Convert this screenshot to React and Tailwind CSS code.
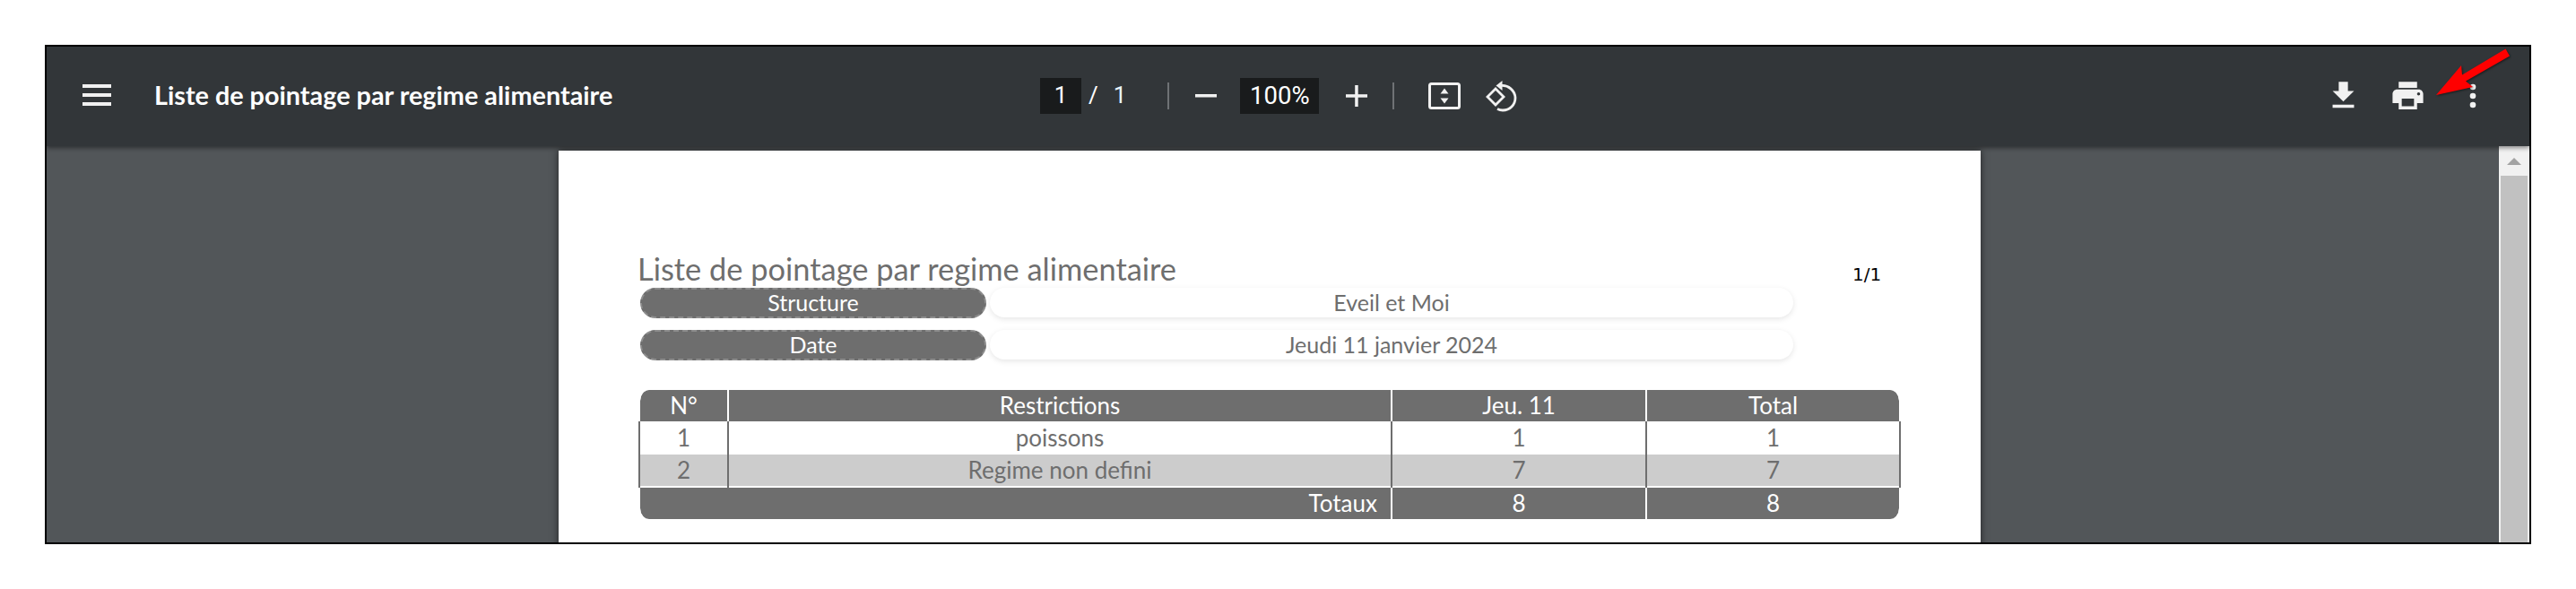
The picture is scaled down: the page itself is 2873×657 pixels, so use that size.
const uiFont = "font-['Lato','Open_Sans',sans-serif]"

const ToolbarSep = () => <div className="w-[2px] h-[30px] bg-[#6f7275]" />

const Toolbar = () => (
  <header className="relative z-10 h-[111px] shrink-0 flex items-center bg-[#323639] shadow-[0_2px_5px_rgba(0,0,0,0.45)] text-[#f1f1f1]">
    <div className="w-[1108px] shrink-0 flex items-center pl-[40px]">
      <svg width="32" height="24" viewBox="0 0 32 24" className="mt-[-2px]" fill="#f1f1f1">
        <rect width="32" height="4" y="0" />
        <rect width="32" height="4" y="10" />
        <rect width="32" height="4" y="20" />
      </svg>
      <span className={`ml-[48px] text-[28.8px] font-bold leading-none text-white mt-[-3px] ${uiFont}`}>
        Liste de pointage par regime alimentaire
      </span>
    </div>

    <div className="flex items-center font-['Roboto',sans-serif] text-[26px] text-white mt-[-2px]">
      <div className="w-[46px] h-[40px] flex items-center justify-center bg-[#191b1c]">1</div>
      <span className="ml-[8px]">/</span>
      <span className="ml-[17px] text-[#e8f4fb]">1</span>
      <div className="ml-[46px]"><ToolbarSep /></div>
      <svg width="24" height="24" viewBox="0 0 24 24" className="ml-[29px]" fill="#f1f1f1">
        <rect x="0" y="10" width="24" height="3.5" />
      </svg>
      <div className="ml-[26px] w-[88px] h-[40px] flex items-center justify-center bg-[#191b1c] text-[27.5px]">100%</div>
      <svg width="24" height="24" viewBox="0 0 24 24" className="ml-[30px]" fill="#f1f1f1">
        <rect x="0" y="10.2" width="24" height="3.5" />
        <rect x="10.2" y="0" width="3.5" height="24" />
      </svg>
      <div className="ml-[28px]"><ToolbarSep /></div>
      <svg width="36" height="30" viewBox="0 0 36 30" className="ml-[38px]" fill="none">
        <rect x="1.5" y="1.5" width="33" height="27" rx="2" stroke="#f1f1f1" strokeWidth="3" />
        <path d="M18 6.5l4.5 6h-9zM18 23.5l-4.5-6h9z" fill="#f1f1f1" />
      </svg>
      <svg width="36" height="36" viewBox="0 0 36 36" className="ml-[28px]" fill="none" stroke="#f1f1f1" strokeWidth="2.8">
        <path d="M11 10l9 9-9 9-9-9z" />
        <path d="M17 6.5a14.5 14.5 0 0 1 16 13.5c0 8-6 14-14 14a14 14 0 0 1-6-1.4" />
        <path d="M11.5 6.5l7-5.5v11z" fill="#f1f1f1" stroke="none" />
      </svg>
    </div>

    <div className="ml-auto flex items-center mt-[-2px] pr-[59px]">
      <svg width="41" height="41" viewBox="0 0 24 24" fill="#f1f1f1">
        <path d="M19 9h-4V3H9v6H5l7 7 7-7zM5 18v2h14v-2H5z" />
      </svg>
      <svg width="41" height="41" viewBox="0 0 24 24" className="ml-[31px]" fill="#f1f1f1">
        <path d="M19 8H5c-1.66 0-3 1.34-3 3v6h4v4h12v-4h4v-6c0-1.66-1.34-3-3-3zm-3 11H8v-5h8v5zm3-7c-.55 0-1-.45-1-1s.45-1 1-1 1 .45 1 1-.45 1-1 1zm-1-9H6v4h12V3z" />
      </svg>
      <svg width="8" height="28" viewBox="0 0 8 28" className="ml-[48px]" fill="#f1f1f1">
        <circle cx="4" cy="4" r="3.3" />
        <circle cx="4" cy="14" r="3.3" />
        <circle cx="4" cy="24" r="3.3" />
      </svg>
    </div>
  </header>
)

const InfoRow = ({ label, value, className = "" }) => (
  <div className={`flex gap-[4px] ${className}`}>
    <div className="w-[386px] h-[34px] flex items-center justify-center rounded-[17px] border-2 border-dashed border-[#8d8d8d] bg-[#6e6e6e] text-white">
      {label}
    </div>
    <div className="w-[896px] h-[33px] flex items-center justify-center rounded-[17px] bg-white text-[#6e6e6e] shadow-[0_2px_6px_rgba(0,0,0,0.1)]">
      {value}
    </div>
  </div>
)

const Table = () => {
  const th = "h-[35px] p-0 pb-[2px] font-normal bg-[#6e6e6e] bg-clip-padding text-white text-center border-r-2 border-white"
  const td = "p-0 font-normal text-center border-r-2 border-[#6e6e6e]"
  const row1 = `${td} h-[37px] pb-[2px]`
  const row2 = `${td} h-[37px] pb-[4px] bg-[linear-gradient(#cccccc_35px,#ffffff_35px)]`
  return (
    <table className="mt-[33px] ml-[-2px] w-[1408px] table-fixed border-separate border-spacing-0 text-[26px] leading-none text-[#6e6e6e]">
      <colgroup>
        <col className="w-[101px]" />
        <col className="w-[740px]" />
        <col className="w-[284px]" />
        <col className="w-[283px]" />
      </colgroup>
      <thead>
        <tr>
          <th className={`${th} border-l-2 rounded-tl-[12px]`}>N°</th>
          <th className={th}>Restrictions</th>
          <th className={th}>Jeu. 11</th>
          <th className={`${th} rounded-tr-[12px]`}>Total</th>
        </tr>
      </thead>
      <tbody>
        <tr>
          <td className={`${row1} border-l-2`}>1</td>
          <td className={row1}>poissons</td>
          <td className={row1}>1</td>
          <td className={row1}>1</td>
        </tr>
        <tr>
          <td className={`${row2} border-l-2`}>2</td>
          <td className={row2}>Regime non defini</td>
          <td className={row2}>7</td>
          <td className={row2}>7</td>
        </tr>
      </tbody>
      <tfoot>
        <tr>
          <td colSpan={2} className={`${th} border-l-2 rounded-bl-[12px] text-right pr-[15px]`}>Totaux</td>
          <td className={th}>8</td>
          <td className={`${th} rounded-br-[12px]`}>8</td>
        </tr>
      </tfoot>
    </table>
  )
}

const Scrollbar = () => (
  <div className="w-[34px] shrink-0 bg-[#f1f1f1] flex flex-col items-center">
    <svg width="16" height="8" viewBox="0 0 16 8" className="mt-[13px]" fill="#a3a3a3">
      <path d="M8 0l8 8H0z" />
    </svg>
    <div className="mt-[12px] w-[30px] flex-1 bg-[#c1c1c1]" />
  </div>
)

export default function App() {
  return (
    <div className="relative w-[2873px] h-[657px] bg-white pt-[50px] pl-[50px] overflow-hidden">
      <div className="w-[2773px] h-[557px] border-2 border-black flex flex-col overflow-hidden">
        <Toolbar />
        <div className="flex-1 flex min-h-0">
          <main className="flex-1 bg-[#525659] pl-[571px] pt-[5px] overflow-hidden">
            <div className={`w-[1586px] h-[500px] bg-white shadow-[0_0_8px_rgba(0,0,0,0.6)] pl-[88px] pt-[112px] text-[25px] ${uiFont}`}>
              <div className="flex items-start h-[41px]">
                <h1 className="w-[1355px] text-[34.4px] leading-[40px] font-normal text-[#6e6e6e]">
                  Liste de pointage par regime alimentaire
                </h1>
                <span className="mt-[14px] font-['DejaVu_Sans',sans-serif] text-[20px] leading-[24px] text-black">1/1</span>
              </div>
              <div className="pl-[3px]">
                <InfoRow label="Structure" value="Eveil et Moi" />
                <InfoRow className="mt-[13px]" label="Date" value="Jeudi 11 janvier 2024" />
                <Table />
              </div>
            </div>
          </main>
          <Scrollbar />
        </div>
      </div>

      {/* red annotation arrow over the toolbar */}
      <svg width="100" height="70" viewBox="0 0 100 70" className="absolute z-20 left-[2708px] top-[50px] drop-shadow-[1px_1px_1px_rgba(0,0,0,0.5)]">
        <path d="M86.5 4.5L91 12.5L42 40.5L50 47L9 56L37 23L38 33.5Z" fill="#ff0000" />
      </svg>
    </div>
  )
}
